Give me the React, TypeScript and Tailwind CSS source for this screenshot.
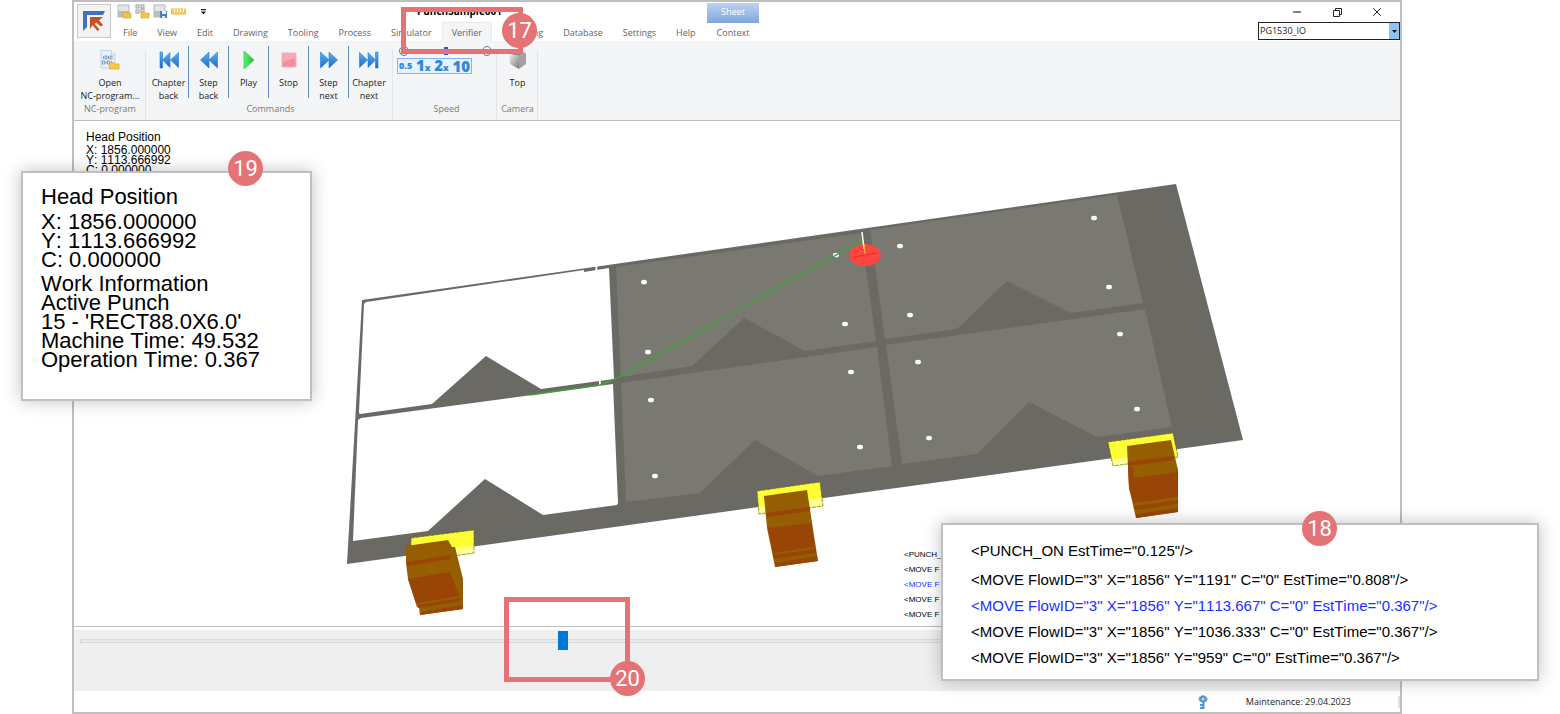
import React from 'react';
import clsx from 'clsx';
import { Minus, X } from 'lucide-react';

const tabs = ['File', 'View', 'Edit', 'Drawing', 'Tooling', 'Process', 'Simulator', 'Verifier', 'Reporting', 'Database', 'Settings', 'Help'];

const workInfo = ['Work Information', 'Active Punch', "15 - 'RECT88.0X6.0'", 'Machine Time: 49.532', 'Operation Time: 0.367'];

const ncLines = [
  '<PUNCH_ON EstTime="0.125"/>',
  '<MOVE FlowID="3" X="1856" Y="1191" C="0" EstTime="0.808"/>',
  '<MOVE FlowID="3" X="1856" Y="1113.667" C="0" EstTime="0.367"/>',
  '<MOVE FlowID="3" X="1856" Y="1036.333" C="0" EstTime="0.367"/>',
  '<MOVE FlowID="3" X="1856" Y="959" C="0" EstTime="0.367"/>',
];

const holes = [
  [644, 282], [836, 255], [845, 324], [648, 352], [851, 372], [651, 400], [860, 447], [655, 476],
  [900, 246], [910, 315], [1094, 218], [1109, 287], [1120, 334], [918, 362], [1137, 409], [929, 438],
];

function BlueDefs() {
  return (
    <svg width="0" height="0" className="absolute" aria-hidden="true">
      <defs>
        <linearGradient id="blue" x1="0" y1="0" x2="0" y2="1">
          <stop offset="0" stopColor="#5db4f5" />
          <stop offset="1" stopColor="#1668c8" />
        </linearGradient>
        <linearGradient id="green" x1="0" y1="0" x2="1" y2="0">
          <stop offset="0" stopColor="#5ff070" />
          <stop offset="1" stopColor="#18c22e" />
        </linearGradient>
        <linearGradient id="cube" x1="0" y1="0" x2="1" y2="1">
          <stop offset="0" stopColor="#f4f4f4" />
          <stop offset="1" stopColor="#777" />
        </linearGradient>
      </defs>
    </svg>
  );
}

function ChapterBackIcon() {
  return (
    <svg width="20" height="20" viewBox="0 0 20 20" fill="url(#blue)" stroke="#2a7ad0" strokeWidth=".6" strokeLinejoin="round">
      <path d="M1 2h2.500v16H1zM11 2.500v15L3.500 10zM19.500 2.500v15L11.500 10z" />
    </svg>
  );
}

function StepBackIcon() {
  return (
    <svg width="20" height="20" viewBox="0 0 20 20" fill="url(#blue)" stroke="#2a7ad0" strokeWidth=".6" strokeLinejoin="round">
      <path d="M10 2v16L1.500 10zM18.500 2v16L10 10z" />
    </svg>
  );
}

function StepNextIcon() {
  return (
    <svg width="20" height="20" viewBox="0 0 20 20" fill="url(#blue)" stroke="#2a7ad0" strokeWidth=".6" strokeLinejoin="round">
      <path d="M10 2v16L18.500 10zM1.500 2v16L10 10z" />
    </svg>
  );
}

function ChapterNextIcon() {
  return (
    <svg width="20" height="20" viewBox="0 0 20 20" fill="url(#blue)" stroke="#2a7ad0" strokeWidth=".6" strokeLinejoin="round">
      <path d="M16.500 2H19v16h-2.500zM9 2.500v15L16.500 10zM.5 2.500v15L8.500 10z" />
    </svg>
  );
}

function PlayIcon() {
  return (
    <svg width="20" height="20" viewBox="0 0 20 20">
      <path d="M5 1l10 9-10 9z" fill="url(#green)" stroke="#37c84a" strokeWidth=".8" />
    </svg>
  );
}

function StopIcon() {
  return (
    <svg width="20" height="20" viewBox="0 0 20 20">
      <rect x="3" y="3" width="14" height="14" fill="#f28f9f" stroke="#f5b4be" />
      <path d="M3.500 3.500h13v5c-5 0-8 2-13 4z" fill="#f7a9b6" />
    </svg>
  );
}

function OpenNcIcon() {
  return (
    <svg width="20" height="20" viewBox="0 0 20 20">
      <path d="M1 .5h10.500l3.500 3.500v14H1z" fill="#eaf2fc" stroke="#b9d0ee" />
      <path d="M11.500.5v3.500H15" fill="#fff" stroke="#b9d0ee" />
      <g fill="none" stroke="#6c88b4" strokeWidth=".8">
        <path d="M3.500 6v3M8.500 6v3" />
        <rect x="5" y="6" width="2" height="3" />
        <rect x="10" y="6" width="2" height="3" />
        <path d="M6 11v3M11.500 11v3" />
        <rect x="2.500" y="11" width="2" height="3" />
        <rect x="7.500" y="11" width="2" height="3" />
      </g>
      <path d="M9.500 12.500h4l1 1.500h4.500v5H9.500z" fill="#f6c945" stroke="#dca52a" strokeWidth=".7" />
    </svg>
  );
}

function CubeIcon() {
  return (
    <svg width="20" height="20" viewBox="0 0 20 20">
      <path d="M1 4l7-3 10 2-7 3z" fill="#8e8e8e" />
      <path d="M1 4l10 2v13L2 14z" fill="url(#cube)" />
      <path d="M11 6l7-3v11l-7 5z" fill="#a2a2a2" />
    </svg>
  );
}

const commands = [
  { icon: ChapterBackIcon, lines: ['Chapter', 'back'] },
  { icon: StepBackIcon, lines: ['Step', 'back'] },
  { icon: PlayIcon, lines: ['Play'] },
  { icon: StopIcon, lines: ['Stop'] },
  { icon: StepNextIcon, lines: ['Step', 'next'] },
  { icon: ChapterNextIcon, lines: ['Chapter', 'next'] },
];

interface RibbonButtonProps {
  icon: () => React.ReactElement;
  lines: string[];
}

function RibbonButton({ icon: Icon, lines }: RibbonButtonProps) {
  return (
    <button className="flex w-full flex-col items-center text-[#1b1b1b]">
      <Icon />
      <span className="mt-1.5 leading-[13px] whitespace-nowrap">
        {lines.map((line) => (
          <span key={line} className="block">{line}</span>
        ))}
      </span>
    </button>
  );
}

function RibbonGroup({ label, className, children }: { label: string; className: string; children: React.ReactNode }) {
  return (
    <section className={clsx('flex flex-col justify-between border-r border-[#e3e4e6] pb-1', className)}>
      {children}
      <h2 className="text-center leading-[14px] text-[#7a7a7a]">{label}</h2>
    </section>
  );
}

function QuickAccess() {
  return (
    <div className="flex h-[19px] items-center gap-[3px] pl-1.5">
      <button aria-label="New sheet">
        <svg width="15" height="15" viewBox="0 0 15 15">
          <path d="M1 1h11v12H1z" fill="#e3e5e7" stroke="#b4b7ba" />
          <path d="M1 7h11v6H1z" fill="#b9bdc0" />
          <path d="M6 8h3l1 1h4v5H6z" fill="#f5c440" stroke="#dba32a" strokeWidth=".6" />
        </svg>
      </button>
      <button aria-label="Open parts">
        <svg width="15" height="15" viewBox="0 0 15 15">
          <g fill="#f4f4f4" stroke="#999">
            <rect x="1" y="1" width="3" height="3" />
            <rect x="6" y="1" width="3" height="3" />
            <rect x="1" y="6" width="3" height="3" />
            <rect x="6" y="5" width="3" height="3" />
          </g>
          <path d="M6 8h3l1 1h4v5H6z" fill="#f5c440" stroke="#dba32a" strokeWidth=".6" />
        </svg>
      </button>
      <button aria-label="Save">
        <svg width="15" height="15" viewBox="0 0 15 15">
          <path d="M1 1h11v12H1z" fill="#e3e5e7" stroke="#b4b7ba" />
          <path d="M1 7h11v6H1z" fill="#b9bdc0" />
          <path d="M7 7h7v7H7z" fill="#4f7dc0" />
          <path d="M9 7h4v3H9zM9 12h3v2H9z" fill="#e8eff9" />
        </svg>
      </button>
      <button aria-label="Measure">
        <svg width="15" height="15" viewBox="0 0 15 15">
          <path d="M.5 5h14v5H.5z" fill="#f6cf62" stroke="#e6b94e" />
          <path d="M3.500 5v3M6.500 5v3M9.500 5v3M12.500 5v3" stroke="#fff" />
        </svg>
      </button>
      <button aria-label="Customize" className="ml-[7px]">
        <svg width="15" height="15" viewBox="0 0 15 15">
          <path d="M5 5h5v1.200H5zM5 7.500h5L7.500 10.500z" fill="#222" />
        </svg>
      </button>
    </div>
  );
}

function TitleBar() {
  return (
    <header className="flex items-start bg-white">
      <div className="flex pl-[3px]">
        <button aria-label="Application menu" className="mt-0.5 flex h-[34px] w-[34px] items-center justify-center border border-[#c9c9c9] bg-[#f3f3f3]">
          <svg width="24" height="24" viewBox="0 0 24 24">
            <path d="M1 22V2h22l-2 4H5v12z" fill="#3b73c0" />
            <path d="M8 8h13l-4 3.500 4 4.500-2 1.500-5-4-1.500 1.500 5 5.500-2 1.500-5-6-2.500 4z" fill="#c9501c" />
          </svg>
        </button>
      </div>
      <div className="flex-1">
        <div className="flex h-5">
          <div className="w-[306px] shrink-0">
            <QuickAccess />
          </div>
          <h1 className="text-[10px] leading-[19px] font-bold text-black">PunchSample001</h1>
        </div>
        <nav className="flex h-[19px] pl-0.5 text-[#636363]">
          {tabs.map((tab) => (
            <button
              key={tab}
              className={clsx('border px-[9px] leading-5', tab === 'Verifier' ? 'border-[#e9eaec] border-b-[#f4f5f7] bg-[#f4f5f7]' : 'border-transparent')}
            >
              {tab}
            </button>
          ))}
          <button className="relative ml-px border border-transparent px-[9px] leading-5">
            <span className="absolute -inset-x-px bottom-full h-5 bg-linear-to-b from-[#bdd2f0] to-[#7fa6dc] leading-[18px] text-white">Sheet</span>
            Context
          </button>
        </nav>
      </div>
      <div className="flex w-[142px] flex-col">
        <div className="flex h-5 items-center justify-end pr-[3px] text-black">
          <button aria-label="Minimize" className="flex w-10 justify-center"><Minus size={12} strokeWidth={2} /></button>
          <button aria-label="Restore" className="flex w-10 justify-center">
            <svg width="11" height="11" viewBox="0 0 11 11" fill="none" stroke="#222">
              <path d="M1.500 3.500h6v6h-6zM3.500 3V1.500h6v6H8" />
            </svg>
          </button>
          <button aria-label="Close" className="flex w-10 justify-center"><X size={14} strokeWidth={1.5} /></button>
        </div>
        <div className="relative">
          <select aria-label="Machine" className="block h-[18px] w-full appearance-none border border-[#222] bg-white pl-px leading-4 text-[#222]">
            <option>PG1530_IO</option>
          </select>
          <span className="pointer-events-none absolute inset-y-px right-px flex w-2.5 items-center justify-center bg-[#8cc4f4]">
            <svg width="5" height="3" viewBox="0 0 5 3"><path d="M0 0h5L2.500 3z" fill="#111" /></svg>
          </span>
        </div>
      </div>
    </header>
  );
}

function SpeedButton({ text, small }: { text: string; small?: string }) {
  return (
    <button className="flex items-baseline leading-[14px] font-extrabold text-[#2f86da]">
      <span className={small === undefined ? 'text-[9px]' : 'text-[15px]'}>{text}</span>
      {small && <span className="text-[9px]">{small}</span>}
    </button>
  );
}

function Ribbon() {
  return (
    <div className="flex h-20 border-b border-[#bcbdbf] bg-[#f4f5f7] pt-[9px]">
      <RibbonGroup label="NC-program" className="w-[72px] pl-px">
        <RibbonButton icon={OpenNcIcon} lines={['Open', 'NC-program...']} />
      </RibbonGroup>
      <RibbonGroup label="Commands" className="w-[247px] pl-[3px]">
        <div className="flex">
          {commands.map((command, index) => (
            <div key={index} className={clsx('-mt-1 h-[52px] w-10 pt-1', index < 5 && 'border-r border-[#5e8fbe]')}>
              <RibbonButton {...command} />
            </div>
          ))}
        </div>
      </RibbonGroup>
      <RibbonGroup label="Speed" className="w-[104px] pl-1">
        <div className="-mt-1 w-[95px]">
          <div className="flex h-2.5 items-center justify-between pl-0.5">
            <span className="h-2.5 w-2.5 rounded-full border border-[#777]" />
            <input
              type="range"
              aria-label="Speed"
              defaultValue={50}
              className="h-2.5 w-16 appearance-none bg-transparent [&::-webkit-slider-thumb]:h-2 [&::-webkit-slider-thumb]:w-1 [&::-webkit-slider-thumb]:appearance-none [&::-webkit-slider-thumb]:bg-[#2463b4]"
            />
            <span className="h-2.5 w-2.5 rounded-full border border-[#777]" />
          </div>
          <div className="mt-0.5 flex h-4 w-[75px] items-center justify-between border border-[#7db9ee] bg-[#e6f2fc] px-px">
            <SpeedButton text="0.5" />
            <SpeedButton text="1" small="x" />
            <SpeedButton text="2" small="x" />
            <SpeedButton text="10" small="" />
          </div>
        </div>
      </RibbonGroup>
      <RibbonGroup label="Camera" className="w-[41px] pl-px">
        <RibbonButton icon={CubeIcon} lines={['Top']} />
      </RibbonGroup>
    </div>
  );
}

function Scene() {
  return (
    <svg viewBox="74 121 1326 505" className="block h-auto w-full" role="img" aria-label="Sheet in machine">
      {/* sheet */}
      <path d="M362 300L1176 184L1243 440L347 564z" fill="#6a6963" />

      {/* parts already cut out */}
      <g fill="#fff">
        <path d="M366 302L584 270V272L609 268L614 379L541 389L486 356L432 404L360 414Q359 414 359 412L364 304z" />
        <path d="M361 418L613 384L618 503L617 505L543 515L485 479L428 531L353 541L358 420z" />
        <path d="M595.500 265h1.800v6h-1.800zM599 379.500h1.800v6.500h-1.800z" />
      </g>

      {/* remaining parts */}
      <g fill="#7a7971">
        <path d="M616 267L861 233L876 341L805 351L744 318L692 366L621 377z" />
        <path d="M621 383L877 347L892 466L818 476L755 440L700 493L626 502z" />
        <path d="M870 230L1117 195L1143 303L1071 313L1007 281L957 329L885 339z" />
        <path d="M886 345L1145 309L1172 427L1097 437L1029 402L977 454L902 464z" />
      </g>
      <g fill="#fff">
        {holes.map(([x, y]) => (
          <ellipse key={`${x}-${y}`} cx={x} cy={y} rx="3" ry="2.300" />
        ))}
      </g>

      {/* tool path and punch head */}
      <path d="M530 395L600 385L617 378L863 240" fill="none" stroke="#43a03f" strokeWidth="1.500" />
      <ellipse cx="865" cy="255" rx="16" ry="11" fill="#ff453f" />
      <path d="M853 257L877 253" stroke="#e03222" />
      <path d="M862 232L864 249" stroke="#fff" strokeWidth="1.500" />
      <path d="M864 244L865 254" stroke="#ffb84d" />

      {/* clamps */}
      <g>
        <path d="M411 538L474 530V553L411 562z" fill="#ffff35" />
        <path d="M455 549L474 546V553L455 556z" fill="#ffff99" />
        <path d="M411 538L474 530V553L411 562z" fill="none" stroke="#6a6900" strokeWidth=".7" strokeDasharray="4 1" />
        <path d="M406 546L448 540L452 547H455L463 579V609L420 615L419 607H417L408 579L406 563z" fill="#955e02" />
        <path d="M407 562L450 555V559L407 566zM408 579L450 572L459 596L416 603zM417 605L461 598V601L418 608zM420 612L463 605V609L420 615z" fill="#984505" />
      </g>
      <g>
        <path d="M757 491L820 482L823 506L759 514z" fill="#ffff35" />
        <path d="M758 507L765 506V513L759 514zM809 500L822 498L823 506L810 507z" fill="#ffff99" />
        <path d="M757 491L820 482L823 506L759 514z" fill="none" stroke="#6a6900" strokeWidth=".7" strokeDasharray="4 1" />
        <path d="M764 496L807 490L818 561L775 567L767 528z" fill="#955e02" />
        <path d="M766 513L810 507V511L766 517zM768 528L811 523L815 547L773 553zM773 555L816 549V553L774 559zM775 563L817 556L818 561L775 567z" fill="#984505" />
      </g>
      <g>
        <path d="M1108 442L1173 433L1178 457L1113 466z" fill="#ffff35" />
        <path d="M1111 460L1128 457V464L1113 466z" fill="#ffff99" />
        <path d="M1108 442L1173 433L1178 457L1113 466z" fill="none" stroke="#6a6900" strokeWidth=".7" strokeDasharray="4 1" />
        <path d="M1127 446L1171 440L1178 470V512L1136 518L1129 488z" fill="#955e02" />
        <path d="M1128 462L1174 456V460L1128 466zM1128 466L1133 468L1134 478L1176 472L1178 470V497L1134 503L1129 488zM1134 506L1178 500V504L1135 510zM1136 514L1178 508V512L1136 518z" fill="#984505" />
      </g>
    </svg>
  );
}

function Viewport() {
  return (
    <main className="relative overflow-hidden border-b border-[#bdbdbd] bg-white font-['Liberation_Sans',Arial,sans-serif] text-black [font-kerning:none]">
      <Scene />
      <div className="absolute top-2 left-3 text-[12px] leading-[10px]">
        <p className="leading-4">Head Position</p>
        <p>X: 1856.000000</p>
        <p>Y: 1113.666992</p>
        <p>C: 0.000000</p>
      </div>
      {/* only the start of each line fits beside the enlarged listing */}
      <div className="absolute bottom-1 left-[830px] text-[8px] leading-[15px] whitespace-nowrap">
        {ncLines.map((line, index) => (
          <p key={line} className={index === 2 ? 'text-[#1a2fff]' : ''}>{line.slice(0, 7)}</p>
        ))}
      </div>
    </main>
  );
}

function Timeline() {
  return (
    <div className="mt-[3px] h-[61px] bg-[#efefef] px-1.5">
      <input
        type="range"
        aria-label="Timeline"
        min={0}
        max={1000}
        defaultValue={366}
        className="block h-[21px] w-full appearance-none bg-transparent [&::-webkit-slider-runnable-track]:h-1 [&::-webkit-slider-runnable-track]:border [&::-webkit-slider-runnable-track]:border-[#d8d8d8] [&::-webkit-slider-runnable-track]:bg-[#e9e9e9] [&::-webkit-slider-thumb]:-mt-[9px] [&::-webkit-slider-thumb]:h-[19px] [&::-webkit-slider-thumb]:w-2.5 [&::-webkit-slider-thumb]:appearance-none [&::-webkit-slider-thumb]:bg-[#0078d7]"
      />
    </div>
  );
}

function StatusBar() {
  return (
    <footer className="flex h-[21px] items-center justify-end bg-white text-[#222]">
      <svg width="12" height="14" viewBox="0 0 12 14" fill="none" stroke="#5592cf">
        <path d="M2 2l8 4M10 2L2 6M1 4h10M6 0v8" />
        <circle cx="6" cy="4" r="2.500" fill="#c5ddf4" strokeWidth="2" />
        <path d="M6.500 7v7M3 10h3M3 13h3" strokeWidth="2" />
      </svg>
      <span className="mr-[47px] ml-[37px] pt-px">Maintenance: 29.04.2023</span>
      <span className="h-3 w-0.5 bg-[#cfe5f8]" />
    </footer>
  );
}

function Marker({ number, className }: { number: number; className: string }) {
  return (
    <span className={clsx("absolute flex h-[35px] w-[35px] items-center justify-center rounded-full bg-[#e57376] font-['Roboto',sans-serif] text-[22px] leading-none text-white", className)}>
      {number}
    </span>
  );
}

export default function App() {
  return (
    <div className="relative min-h-screen overflow-hidden bg-white font-['Open_Sans','Noto_Sans',sans-serif] text-[9px]">
      <BlueDefs />
      <div className="mr-[158px] ml-[72px] border-2 border-[#bfbfbf]">
        <TitleBar />
        <Ribbon />
        <Viewport />
        <Timeline />
        <StatusBar />
      </div>

      {/* Highlights */}
      <div className="absolute top-[7px] left-[401px] h-[47px] w-[122px] border-5 border-[#e57376]" />
      <div className="absolute top-[597px] left-[504px] h-[85px] w-[126px] border-5 border-[#e57376]" />

      {/* Enlarged details */}
      <aside className="absolute top-[171px] left-[21px] h-[230px] w-[291px] border-2 border-[#bfbfbf] bg-white px-[18px] py-[13px] font-['Liberation_Sans',Arial,sans-serif] text-[22px] leading-[19px] whitespace-nowrap text-black shadow-[0_0_16px_rgba(0,0,0,0.25)] [font-kerning:none]">
        <p className="mb-1 leading-[22px]">Head Position</p>
        <p>X: 1856.000000</p>
        <p>Y: 1113.666992</p>
        <p className="mb-[5px]">C: 0.000000</p>
        {workInfo.map((line) => (
          <p key={line}>{line}</p>
        ))}
      </aside>
      <aside className="absolute top-[523px] left-[941px] h-[158px] w-[598px] border-2 border-[#bfbfbf] bg-white px-7 py-[13px] font-['Liberation_Sans',Arial,sans-serif] text-[15px] leading-[26px] whitespace-nowrap text-black shadow-[0_0_16px_rgba(0,0,0,0.25)] [font-kerning:none]">
        {ncLines.map((line, index) => (
          <p key={line} className={clsx(index === 0 && 'mb-[3px]', index === 2 && 'text-[#1a2fff]')}>{line}</p>
        ))}
      </aside>

      <Marker number={17} className="top-[13px] left-[502px]" />
      <Marker number={18} className="top-[511px] left-[1302px]" />
      <Marker number={19} className="top-[151px] left-[228px]" />
      <Marker number={20} className="top-[661px] left-[610px]" />
    </div>
  );
}
